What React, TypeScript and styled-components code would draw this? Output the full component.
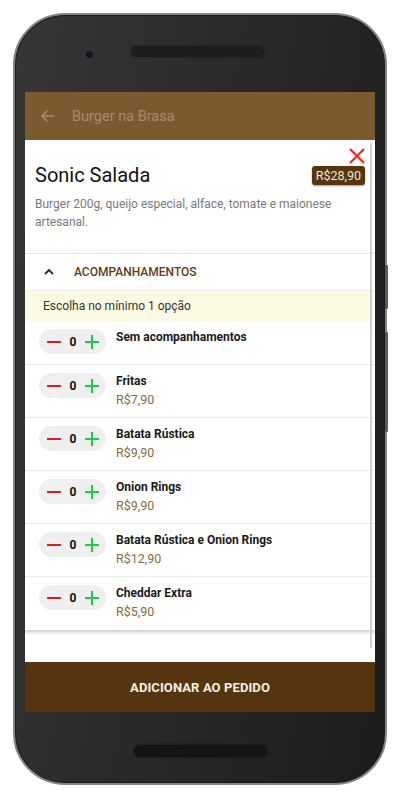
import styled, { createGlobalStyle } from 'styled-components';

const GlobalStyle = createGlobalStyle`
  html, body {
    margin: 0;
    padding: 0;
    background: #ffffff;
    font-family: Roboto, "Liberation Sans", Arial, sans-serif;
  }
  * {
    box-sizing: border-box;
  }
`;

const Page = styled.div`
  width: 400px;
  height: 800px;
  padding: 13px 0 0 13px;
`;

const Phone = styled.div`
  position: relative;
  width: 374px;
  height: 772px;
  border-radius: 52px;
  border: 2px solid #858585;
  background: linear-gradient(100deg, #363636 0%, #2a2a2a 45%, #1c1c1c 100%);
  box-shadow: inset 0 0 0 1px #1a1a1a;
  display: flex;
  flex-direction: column;
  align-items: center;
`;

const SideButton = styled.div<{ $top: number; $height: number }>`
  position: absolute;
  right: -3px;
  top: ${(p) => p.$top}px;
  width: 3px;
  height: ${(p) => p.$height}px;
  background: #5a5a5a;
  border-radius: 1px;
`;

const TopBezel = styled.div`
  height: 77px;
  width: 100%;
  display: flex;
  align-items: flex-start;
  padding-top: 31px;
  padding-left: 71px;
  gap: 38px;
`;

const Camera = styled.div`
  width: 7px;
  height: 7px;
  margin-top: 5px;
  border-radius: 50%;
  background: #141428;
`;

const Speaker = styled.div`
  width: 133px;
  height: 11px;
  border-radius: 6px;
  background: #1d1d1d;
  box-shadow: 0 0 3px #1d1d1d;
`;

const Screen = styled.div`
  width: 350px;
  height: 620px;
  display: flex;
  flex-direction: column;
  background: #ffffff;
  overflow: hidden;
`;

const AppBar = styled.div`
  height: 48px;
  flex-shrink: 0;
  background: #7a5a2e;
  display: flex;
  align-items: center;
  padding-left: 14px;
  gap: 15px;
`;

const AppBarTitle = styled.span`
  font-size: 14.5px;
  color: #a48b70;
`;

const Modal = styled.div`
  position: relative;
  flex: 1;
  background: #ffffff;
  display: flex;
  flex-direction: column;
`;

const ScrollThumb = styled.div`
  position: absolute;
  right: 3px;
  top: 3px;
  width: 2px;
  height: 505px;
  background: #cfcfcf;
`;

const CloseButton = styled.button`
  position: absolute;
  top: 7px;
  right: 9px;
  width: 18px;
  height: 18px;
  padding: 0;
  border: none;
  background: none;
  display: flex;
`;

const ProductHead = styled.div`
  padding: 23px 10px 22px 10px;
`;

const TitleRow = styled.div`
  display: flex;
  align-items: center;
  justify-content: space-between;
`;

const ProductTitle = styled.h1`
  margin: 0;
  font-size: 20px;
  font-weight: 400;
  line-height: 24px;
  color: #111111;
`;

const PriceBadge = styled.span`
  background: #55360f;
  color: #f1e6d6;
  font-size: 12.5px;
  line-height: 19px;
  padding: 0 4px;
  border-radius: 3px;
  box-shadow: 0 1px 2px rgba(0, 0, 0, 0.4);
`;

const Description = styled.p`
  margin: 8px 0 0 0;
  font-size: 12px;
  line-height: 18px;
  color: #7a7a7a;
`;

const OptionsCard = styled.div`
  border-top: 1px solid #e6e6e6;
  box-shadow: 0 2px 4px rgba(0, 0, 0, 0.22);
  background: #ffffff;
`;

const SectionHeader = styled.div`
  height: 37px;
  display: flex;
  align-items: center;
  padding-left: 19px;
  gap: 20px;
  border-bottom: 1px solid #ececec;
`;

const SectionTitle = styled.span`
  font-size: 12px;
  font-weight: 500;
  color: #5d3c14;
`;

const Banner = styled.div`
  height: 30px;
  display: flex;
  align-items: center;
  padding-left: 18px;
  margin-right: 2px;
  background: #fdfae4;
  font-size: 12px;
  color: #333333;
`;

const OptionRow = styled.div<{ $last?: boolean }>`
  display: flex;
  align-items: flex-start;
  gap: 10px;
  padding: 8px 14px;
  min-height: ${(p) => (p.$last ? 53 : 44)}px;
  border-bottom: ${(p) => (p.$last ? 'none' : '1px solid #ececec')};
`;

const Stepper = styled.div`
  width: 67px;
  height: 25px;
  flex-shrink: 0;
  border-radius: 13px;
  background: #efefef;
  display: flex;
  align-items: center;
  justify-content: space-between;
  padding: 0 7px 0 8px;
`;

const Count = styled.span`
  font-size: 12px;
  font-weight: 700;
  color: #111111;
`;

const OptionText = styled.div`
  display: flex;
  flex-direction: column;
`;

const OptionName = styled.span`
  font-size: 12px;
  font-weight: 700;
  line-height: 17px;
  color: #1a1a1a;
`;

const OptionPrice = styled.span`
  font-size: 12.5px;
  line-height: 18px;
  margin-top: 1px;
  color: #8a6a42;
`;

const Spacer = styled.div`
  flex: 1;
`;

const Footer = styled.button`
  height: 50px;
  flex-shrink: 0;
  border: none;
  background: #55350f;
  color: #f5eee4;
  font-family: Roboto, "Liberation Sans", Arial, sans-serif;
  font-size: 13px;
  font-weight: 700;
  letter-spacing: 0.1px;
`;

const BottomBezel = styled.div`
  flex: 1;
  width: 100%;
  display: flex;
  justify-content: center;
  padding-top: 33px;
`;

const HomeBar = styled.div`
  width: 133px;
  height: 12px;
  border-radius: 6px;
  background: #141414;
  box-shadow: 0 0 3px #141414;
`;

function Minus() {
  return (
    <svg width="14" height="14" viewBox="0 0 14 14">
      <path d="M0 7h14" stroke="#e01b1b" strokeWidth="2" />
    </svg>
  );
}

function Plus() {
  return (
    <svg width="14" height="14" viewBox="0 0 14 14">
      <path d="M0 7h14M7 0v14" stroke="#1fcc45" strokeWidth="2" />
    </svg>
  );
}

interface Option {
  name: string;
  price?: string;
}

const options: Option[] = [
  { name: 'Sem acompanhamentos' },
  { name: 'Fritas', price: 'R$7,90' },
  { name: 'Batata Rústica', price: 'R$9,90' },
  { name: 'Onion Rings', price: 'R$9,90' },
  { name: 'Batata Rústica e Onion Rings', price: 'R$12,90' },
  { name: 'Cheddar Extra', price: 'R$5,90' },
];

export default function App() {
  return (
    <Page>
      <GlobalStyle />
      <Phone>
        <SideButton $top={250} $height={44} />
        <SideButton $top={317} $height={100} />
        <TopBezel>
          <Camera />
          <Speaker />
        </TopBezel>
        <Screen>
          <AppBar>
            <svg width="18" height="18" viewBox="0 0 24 24">
              <path d="M20 12H4M11 5l-7 7 7 7" fill="none" stroke="#a48b70" strokeWidth="2.2" />
            </svg>
            <AppBarTitle>Burger na Brasa</AppBarTitle>
          </AppBar>
          <Modal>
            <ScrollThumb />
            <CloseButton aria-label="Fechar">
              <svg width="18" height="18" viewBox="0 0 18 18">
                <path d="M2 2l14 14M16 2L2 16" stroke="#ff1a1a" strokeWidth="2" />
              </svg>
            </CloseButton>
            <ProductHead>
              <TitleRow>
                <ProductTitle>Sonic Salada</ProductTitle>
                <PriceBadge>R$28,90</PriceBadge>
              </TitleRow>
              <Description>
                Burger 200g, queijo especial, alface, tomate e maionese artesanal.
              </Description>
            </ProductHead>
            <OptionsCard>
              <SectionHeader>
                <svg width="10" height="10" viewBox="0 0 10 10">
                  <path d="M1 7l4-4 4 4" fill="none" stroke="#3a2410" strokeWidth="1.8" />
                </svg>
                <SectionTitle>ACOMPANHAMENTOS</SectionTitle>
              </SectionHeader>
              <Banner>Escolha no mínimo 1 opção</Banner>
              {options.map((o, i) => (
                <OptionRow key={o.name} $last={i === options.length - 1}>
                  <Stepper>
                    <Minus />
                    <Count>0</Count>
                    <Plus />
                  </Stepper>
                  <OptionText>
                    <OptionName>{o.name}</OptionName>
                    {o.price && <OptionPrice>{o.price}</OptionPrice>}
                  </OptionText>
                </OptionRow>
              ))}
            </OptionsCard>
            <Spacer />
          </Modal>
          <Footer>ADICIONAR AO PEDIDO</Footer>
        </Screen>
        <BottomBezel>
          <HomeBar />
        </BottomBezel>
      </Phone>
    </Page>
  );
}
